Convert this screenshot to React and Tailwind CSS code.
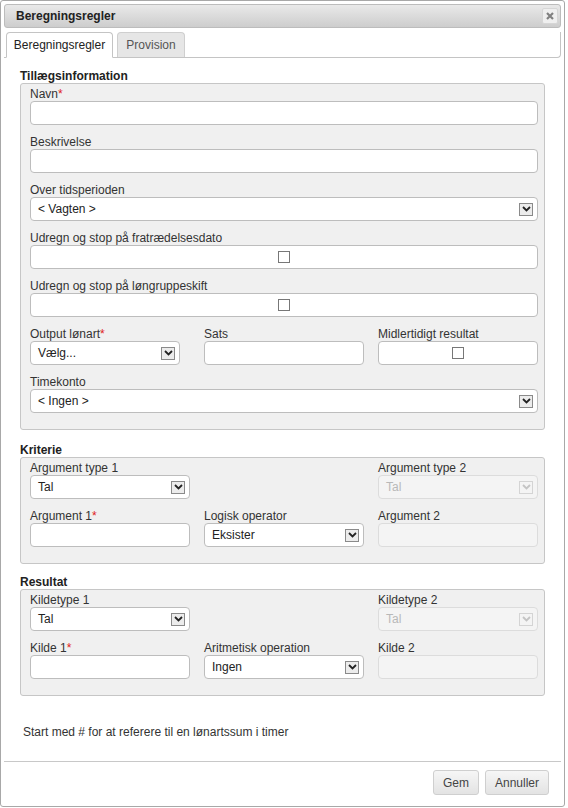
import React from 'react';

function Chevron({ disabled }) {
  return (
    <span
      className={
        'flex h-[13px] w-[14px] items-center justify-center border ' +
        (disabled ? 'border-[#d4d4d4] bg-[#f4f4f4]' : 'border-[#8a8a8a] bg-[#ececec]')
      }
    >
      <svg width="9" height="6" viewBox="0 0 9 6" fill="none">
        <polyline
          points="1 1 4.5 4.5 8 1"
          stroke={disabled ? '#c4c4c4' : '#222'}
          strokeWidth="1.8"
        />
      </svg>
    </span>
  );
}

function Label({ text, required }) {
  return (
    <div className="h-[14px] text-[12px] leading-[14px] text-[#333]">
      {text}
      {required && <span className="text-[#e02020]">*</span>}
    </div>
  );
}

function TextBox({ disabled }) {
  return (
    <div
      className={
        'h-[24px] rounded-[4px] border ' +
        (disabled ? 'border-[#dcdcdc] bg-[#f4f4f4]' : 'border-[#bdbdbd] bg-white')
      }
    />
  );
}

function SelectBox({ value, disabled }) {
  return (
    <div
      className={
        'flex h-[24px] items-center justify-between rounded-[4px] border pl-[7px] pr-[4px] text-[12px] ' +
        (disabled ? 'border-[#dcdcdc] bg-[#f4f4f4] text-[#b8b8b8]' : 'border-[#bdbdbd] bg-white text-[#222]')
      }
    >
      <span>{value}</span>
      <Chevron disabled={disabled} />
    </div>
  );
}

function CheckBox() {
  return (
    <div className="flex h-[24px] items-center justify-center rounded-[4px] border border-[#bdbdbd] bg-white">
      <span className="h-[12px] w-[12px] border border-[#777] bg-white" />
    </div>
  );
}

function Field({ label, required, children }) {
  return (
    <div className="mb-[10px]">
      <Label text={label} required={required} />
      {children}
    </div>
  );
}

function Section({ title, children }) {
  return (
    <div>
      <div className="h-[14px] text-[12px] font-bold leading-[14px] text-[#222]">{title}</div>
      <div className="rounded-[3px] border border-[#c6c6c6] bg-[#f0f0f0] pb-[6px] pl-[9px] pr-[6px] pt-[3px]">
        {children}
      </div>
    </div>
  );
}

function Btn({ children }) {
  return (
    <button className="h-[25px] rounded-[3px] border border-[#cfcfcf] bg-gradient-to-b from-[#f6f6f6] to-[#e3e3e3] px-[9px] text-[12px] text-[#444]">
      {children}
    </button>
  );
}

export default function App() {
  return (
    <div
      className="h-[807px] w-[565px] rounded-[3px] border border-[#a8a8a8] bg-white p-[3px] text-[#333]"
      style={{ fontFamily: '"Liberation Sans", Arial, sans-serif' }}
    >
      {/* title bar */}
      <div className="flex h-[24px] items-center justify-between rounded-[3px] border border-[#bcbcbc] bg-gradient-to-b from-[#e9e9e9] to-[#cdcdcd] pl-[11px] pr-[2px]">
        <span className="text-[12px] font-bold text-[#222]">Beregningsregler</span>
        <span className="flex h-[16px] w-[16px] items-center justify-center rounded-[2px] border border-[#d6d6d6] bg-[#efefef]">
          <svg width="8" height="8" viewBox="0 0 8 8">
            <path d="M1 1L7 7M7 1L1 7" stroke="#808080" strokeWidth="2.2" />
          </svg>
        </span>
      </div>

      {/* tabs */}
      <div className="mt-[4px] flex h-[26px] items-end gap-[4px] rounded-br-[4px] border-b border-r border-[#c4c4c4] pl-[2px]">
        <div className="-mb-px flex h-[26px] w-[107px] items-center justify-center rounded-t-[4px] border border-b-white border-[#c4c4c4] bg-white text-[12px] text-[#222]">
          Beregningsregler
        </div>
        <div className="flex h-[25px] w-[68px] items-center justify-center rounded-t-[4px] border border-b-0 border-[#cfcfcf] bg-[#e6e6e6] text-[12px] text-[#555]">
          Provision
        </div>
      </div>

      {/* body */}
      <div className="px-[16px] pt-[11px]">
        <Section title="Tillægsinformation">
          <Field label="Navn" required>
            <TextBox />
          </Field>
          <Field label="Beskrivelse">
            <TextBox />
          </Field>
          <Field label="Over tidsperioden">
            <SelectBox value="< Vagten >" />
          </Field>
          <Field label="Udregn og stop på fratrædelsesdato">
            <CheckBox />
          </Field>
          <Field label="Udregn og stop på løngruppeskift">
            <CheckBox />
          </Field>
          <div className="grid grid-cols-[160px_160px_160px] gap-x-[14px]">
            <Field label="Output lønart" required>
              <div className="w-[150px]">
                <SelectBox value="Vælg..." />
              </div>
            </Field>
            <Field label="Sats">
              <TextBox />
            </Field>
            <Field label="Midlertidigt resultat">
              <CheckBox />
            </Field>
          </div>
          <Field label="Timekonto">
            <SelectBox value="< Ingen >" />
          </Field>
        </Section>

        <div className="mt-[13px]">
          <Section title="Kriterie">
            <div className="grid grid-cols-[160px_160px_160px] gap-x-[14px]">
              <Field label="Argument type 1">
                <SelectBox value="Tal" />
              </Field>
              <div />
              <Field label="Argument type 2">
                <SelectBox value="Tal" disabled />
              </Field>
              <Field label="Argument 1" required>
                <TextBox />
              </Field>
              <Field label="Logisk operator">
                <SelectBox value="Eksister" />
              </Field>
              <Field label="Argument 2">
                <TextBox disabled />
              </Field>
            </div>
          </Section>
        </div>

        <div className="mt-[11px]">
          <Section title="Resultat">
            <div className="grid grid-cols-[160px_160px_160px] gap-x-[14px]">
              <Field label="Kildetype 1">
                <SelectBox value="Tal" />
              </Field>
              <div />
              <Field label="Kildetype 2">
                <SelectBox value="Tal" disabled />
              </Field>
              <Field label="Kilde 1" required>
                <TextBox />
              </Field>
              <Field label="Aritmetisk operation">
                <SelectBox value="Ingen" />
              </Field>
              <Field label="Kilde 2">
                <TextBox disabled />
              </Field>
            </div>
          </Section>
        </div>

        <div className="mt-[29px] pl-[3px] text-[12px] leading-[14px] text-[#333]">
          Start med # for at referere til en lønartssum i timer
        </div>
      </div>

      {/* footer */}
      <div className="mt-[22px] flex justify-end gap-[6px] border-t border-[#c8c8c8] pr-[12px] pt-[8px]">
        <Btn>Gem</Btn>
        <Btn>Annuller</Btn>
      </div>
    </div>
  );
}
